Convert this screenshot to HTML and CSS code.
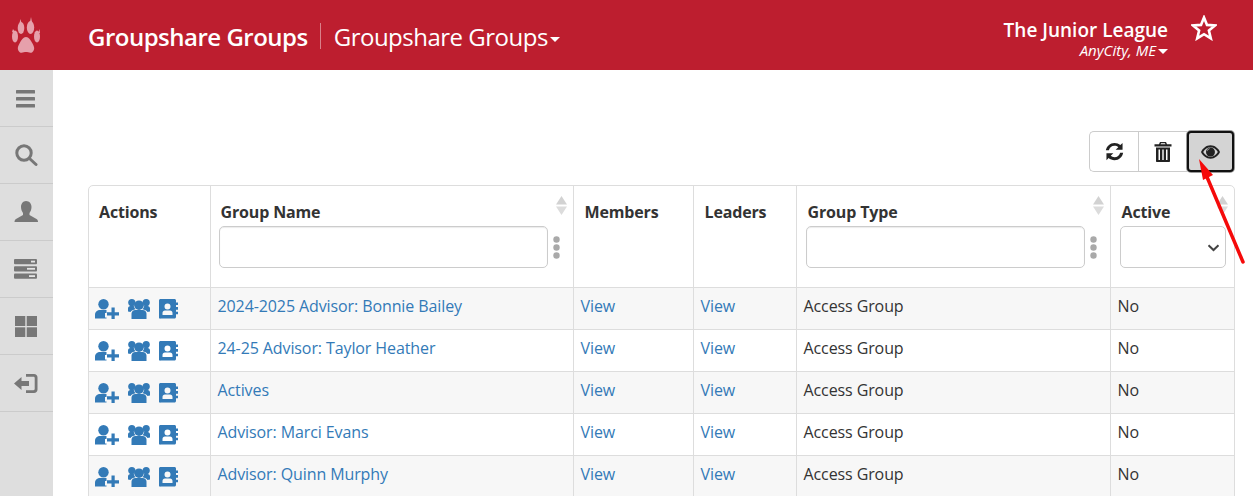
FILE: index.html
```html
<!DOCTYPE html>
<html lang="en">
<head>
<meta charset="utf-8">
<title>Groupshare Groups</title>
<link rel="stylesheet" href="styles.css">
</head>
<body>
<svg class="defs" width="0" height="0">
  <defs>
    <symbol id="i-add" viewBox="0 0 24 20"><circle cx="8.500" cy="5.200" r="5.200"/><path d="M0 19.500V16C0 12.800 2.500 11 5 11h6.500V14H10v4.500h1.500v1z"/><path d="M16.500 8.500h3.200v4.700H24v3.200h-4.300v4.600h-3.200v-4.600H12v-3.200h4.500z"/></symbol>
    <symbol id="i-group" viewBox="0 0 22 20"><circle cx="11" cy="6.200" r="4.800"/><circle cx="3.800" cy="3.600" r="3.600"/><circle cx="18.200" cy="3.600" r="3.600"/><path d="M3.500 20v-5.200c0-2.300 1.700-3.800 3.800-3.800h7.400c2.100 0 3.800 1.500 3.800 3.800V20z"/><path d="M0 12.500V9.500C0 8 1 7 2.500 7h3.300c.2 1.300.8 2.400 1.700 3.200-2.400.4-4.200 1.500-5 2.800z"/><path d="M22 12.500V9.500C22 8 21 7 19.500 7h-3.300c-.2 1.300-.8 2.400-1.700 3.200 2.400.4 4.200 1.500 5 2.800z"/></symbol>
    <symbol id="i-book" viewBox="0 0 19 20"><path fill-rule="evenodd" d="M1.500 0h14c.8 0 1.500.7 1.500 1.500v2h2v2.600h-2v2h2v2.600h-2v2h2v2.600h-2v2.700c0 .8-.7 1.500-1.500 1.500h-14C.7 20 0 19.300 0 18.500v-17C0 .7.700 0 1.500 0zM8.500 4.500a3 3 0 1 0 0 6 3 3 0 0 0 0-6zM3.500 16h10v-2c0-1.500-1-2.500-2.500-2.500H6c-1.500 0-2.500 1-2.500 2.500z"/></symbol>
    <symbol id="i-sort" viewBox="0 0 11 19"><path d="M5.500 0 11 8.500H0z" fill="#d2d2d2"/><path d="M0 10.500h11L5.500 19z" fill="#dcdcdc"/></symbol>
    <symbol id="i-dots" viewBox="0 0 7 23"><circle cx="3.500" cy="3.500" r="3.200"/><circle cx="3.500" cy="11.500" r="3.200"/><circle cx="3.500" cy="19.500" r="3.200"/></symbol>
  </defs>
</svg>

<header class="topbar">
  <div class="logo">
    <svg width="30" height="36" viewBox="0 0 30 36" fill="#e6a0ab">
      <path d="M15 20c2.800 0 4.600 3 6.500 6.500 1.700 3 2.800 6-.2 8.700-1.800 1.300-4.500-.2-6.300-.2s-4.500 1.500-6.300.2c-3-2.700-1.900-5.700-.2-8.700C10.400 23 12.200 20 15 20z"/>
      <ellipse cx="10" cy="11" rx="3.300" ry="6"/>
      <ellipse cx="19.500" cy="10.500" rx="3.700" ry="6.500"/>
      <ellipse cx="4" cy="19.500" rx="3" ry="6"/>
      <ellipse cx="26" cy="19.500" rx="3" ry="6"/>
      <path d="M9.500 2 10.500 6h-2zM20 0l1 5h-2zM2 12l2 3H1zM28.500 12l.5 4h-2z"/>
    </svg>
  </div>
  <div class="titles">
    <span class="app-title">Groupshare Groups</span>
    <span class="divider"></span>
    <span class="page-title">Groupshare Groups<span class="caret caret-big"></span></span>
  </div>
  <div class="org">
    <div class="org-name">The Junior League</div>
    <div class="org-city">AnyCity, ME<span class="caret"></span></div>
  </div>
  <svg class="star" width="26" height="26" viewBox="0 0 26 26" fill="none" stroke="#fff" stroke-width="2.600"><path d="M13 2.500l3 7.400 8 .6-6.100 5.100 1.900 7.800L13 19.200l-6.800 4.200 1.900-7.800L2 10.500l8-.6z"/></svg>
</header>

<div class="body-row">
  <nav class="sidebar">
    <a class="nav-item"><svg width="20" height="19" viewBox="0 0 20 19" fill="#777"><rect y="1" width="19" height="3.500" rx=".6"/><rect y="8" width="19" height="3.500" rx=".6"/><rect y="15" width="19" height="3.500" rx=".6"/></svg></a>
    <a class="nav-item"><svg width="24" height="24" viewBox="0 0 24 24" fill="none" stroke="#777" stroke-width="3"><circle cx="10" cy="10" r="7.200"/><path d="M15.500 15.500l6.500 6" stroke-linecap="round"/></svg></a>
    <a class="nav-item"><svg width="24" height="24" viewBox="0 0 24 24" fill="#777"><path d="M12 1c3.500 0 5.500 2.800 5.500 6 0 2.500-1 4.500-2 6v2l7 4c1 .6 1.500 1.500 1.500 3H.5c0-1.500.5-2.400 1.500-3l7-4v-2c-1-1.500-2-3.500-2-6 0-3.200 2-6 5-6z"/></svg></a>
    <a class="nav-item"><svg width="23" height="20" viewBox="0 0 23 20"><g fill="#777"><rect width="23" height="5.300" rx="1"/><rect y="7.200" width="23" height="5.300" rx="1"/><rect y="14.500" width="23" height="5.300" rx="1"/></g><g fill="#e4e4e4"><rect x="17" y="1.700" width="4" height="1.800"/><rect x="13" y="8.900" width="8" height="1.800"/><rect x="15" y="16.200" width="6" height="1.800"/></g></svg></a>
    <a class="nav-item"><svg width="22" height="21" viewBox="0 0 22 21" fill="#777"><rect width="10.300" height="10"/><rect x="11.700" width="10.300" height="10"/><rect y="11.300" width="10.300" height="9.700"/><rect x="11.700" y="11.300" width="10.300" height="9.700"/></svg></a>
    <a class="nav-item"><svg width="24" height="21" viewBox="0 0 24 21" fill="#777"><path d="M12 1h8c2 0 3.500 1.500 3.500 3.500v12c0 2-1.500 3.500-3.500 3.500h-8v-2.800h7.500c.7 0 1.200-.5 1.200-1.200V5c0-.7-.5-1.200-1.200-1.200H12z"/><path d="M0 10.500 7.500 4v4H15v5H7.500v4z"/></svg></a>
  </nav>

  <main class="content">
    <div class="toolbar">
      <div class="btn-group">
        <button class="btn" type="button"><svg width="23" height="23" viewBox="0 0 20 20" fill="#222"><path d="M17 2.500v6h-6l2.300-2.300C12.400 5.400 11.300 5 10 5 7.600 5 5.600 6.700 5.100 9H2.500C3 5.300 6.200 2.500 10 2.500c2 0 3.700.7 5.100 1.900zM3 17.500v-6h6l-2.300 2.300c.9.800 2 1.200 3.300 1.200 2.400 0 4.400-1.700 4.900-4h2.600c-.5 3.700-3.700 6.500-7.500 6.500-2 0-3.700-.7-5.100-1.900z"/></svg></button>
        <button class="btn" type="button"><svg width="18" height="20" viewBox="0 0 18 20" fill="#222"><path d="M6 0h6l1 2.300h4.500v2.200H.5V2.300H5zM7 1.300 6.600 2.300h4.800L11 1.300z"/><path d="M2 5.500h14V19c0 .6-.4 1-1 1H3c-.6 0-1-.4-1-1zM4.500 7.500v10.500h1.500V7.500zM8.300 7.500v10.500h1.400V7.500zM12 7.500v10.500h1.500V7.500z" fill-rule="evenodd"/></svg></button>
        <button class="btn btn-active" type="button"><svg width="19" height="14" viewBox="0 0 20 14"><path d="M10 0C5.500 0 2 3 0 7c2 4 5.500 7 10 7s8-3 10-7c-2-4-5.500-7-10-7z" fill="#222"/><path d="M10 2C7 2 4 3.700 2.300 7 4 10.300 7 12 10 12s6-1.700 7.700-5C16 3.700 13 2 10 2z" fill="#d4d4d4"/><circle cx="10" cy="7" r="4.700" fill="#222"/><path d="M9.500 3.500a3.500 3.500 0 0 0-3 3 2.500 2.500 0 0 1 3-3z" fill="#d4d4d4"/></svg></button>
      </div>
    </div>

    <div class="table-wrap">
      <table class="grid">
        <colgroup>
          <col class="c-actions"><col class="c-name"><col class="c-members"><col class="c-leaders"><col class="c-type"><col class="c-active">
        </colgroup>
        <thead>
          <tr>
            <th>Actions</th>
            <th class="sortable">
              <div>Group Name</div>
              <svg class="sort"><use href="#i-sort"/></svg>
              <div class="filter"><input class="input" type="text" aria-label="Group Name"><svg class="dots"><use href="#i-dots"/></svg></div>
            </th>
            <th>Members</th>
            <th>Leaders</th>
            <th class="sortable">
              <div>Group Type</div>
              <svg class="sort"><use href="#i-sort"/></svg>
              <div class="filter"><input class="input" type="text" aria-label="Group Type"><svg class="dots"><use href="#i-dots"/></svg></div>
            </th>
            <th class="sortable">
              <div>Active</div>
              <svg class="sort"><use href="#i-sort"/></svg>
              <div class="filter"><div class="select"><svg width="13" height="8" viewBox="0 0 13 8" fill="none" stroke="#444" stroke-width="2"><path d="M1.500 1.200 6.500 6l5-4.800"/></svg></div></div>
            </th>
          </tr>
        </thead>
        <tbody>
          <tr>
            <td class="acts"><svg class="ic-add"><use href="#i-add"/></svg><svg class="ic-group"><use href="#i-group"/></svg><svg class="ic-book"><use href="#i-book"/></svg></td>
            <td><a>2024-2025 Advisor: Bonnie Bailey</a></td><td><a>View</a></td><td><a>View</a></td><td>Access Group</td><td>No</td>
          </tr>
          <tr>
            <td class="acts"><svg class="ic-add"><use href="#i-add"/></svg><svg class="ic-group"><use href="#i-group"/></svg><svg class="ic-book"><use href="#i-book"/></svg></td>
            <td><a>24-25 Advisor: Taylor Heather</a></td><td><a>View</a></td><td><a>View</a></td><td>Access Group</td><td>No</td>
          </tr>
          <tr>
            <td class="acts"><svg class="ic-add"><use href="#i-add"/></svg><svg class="ic-group"><use href="#i-group"/></svg><svg class="ic-book"><use href="#i-book"/></svg></td>
            <td><a>Actives</a></td><td><a>View</a></td><td><a>View</a></td><td>Access Group</td><td>No</td>
          </tr>
          <tr>
            <td class="acts"><svg class="ic-add"><use href="#i-add"/></svg><svg class="ic-group"><use href="#i-group"/></svg><svg class="ic-book"><use href="#i-book"/></svg></td>
            <td><a>Advisor: Marci Evans</a></td><td><a>View</a></td><td><a>View</a></td><td>Access Group</td><td>No</td>
          </tr>
          <tr>
            <td class="acts"><svg class="ic-add"><use href="#i-add"/></svg><svg class="ic-group"><use href="#i-group"/></svg><svg class="ic-book"><use href="#i-book"/></svg></td>
            <td><a>Advisor: Quinn Murphy</a></td><td><a>View</a></td><td><a>View</a></td><td>Access Group</td><td>No</td>
          </tr>
        </tbody>
      </table>
    </div>
  </main>
</div>

<svg class="annot" width="60" height="110" viewBox="0 0 60 110" fill="none">
  <path d="M48 107 12 22" stroke="#f50a0a" stroke-width="3.500" stroke-linecap="round"/>
  <path d="M4 4 18 20 8 25z" fill="#f50a0a"/>
</svg>
</body>
</html>
```

FILE: styles.css
```css
* { box-sizing: border-box; }
html, body { margin: 0; height: 100%; overflow: hidden; }
body {
  font-family: "Open Sans", "Noto Sans", "Liberation Sans", sans-serif;
  font-size: 16px;
  color: #333;
  background: #fff;
  position: relative;
}
.defs { position: absolute; }

.topbar {
  height: 70px;
  background: #bd1e2f;
  color: #fff;
  display: flex;
  align-items: center;
}
.logo { width: 53px; display: flex; justify-content: center; padding-right: 1px; flex: none; }
.titles { margin-left: 35px; display: flex; align-items: center; flex: 1; padding-top: 2px; }
.app-title { font-size: 24px; font-weight: 600; letter-spacing: -.5px; }
.divider { width: 1px; height: 26px; background: #d9808a; margin: 0 13px 0 12px; }
.page-title { font-size: 24px; letter-spacing: -.5px; }
.caret {
  display: inline-block;
  border-top: 5px solid #fff;
  border-left: 5px solid transparent;
  border-right: 5px solid transparent;
  vertical-align: middle;
  margin-left: 2px;
}
.org { text-align: right; line-height: 1; padding-top: 7px; }
.org-name { font-size: 19px; font-weight: 600; line-height: 24px; }
.org-city { font-size: 15px; font-style: italic; line-height: 17px; }
.star { margin: 0 36px 14px 23px; flex: none; }

.body-row { display: flex; height: 426px; }
.sidebar { width: 53px; background: #dedede; flex: none; }
.nav-item {
  height: 57px;
  display: flex;
  align-items: center;
  justify-content: center;
  border-bottom: 1px solid #cbcbcb;
  padding-right: 2px;
}

.content { flex: 1; padding: 61px 18px 0 35px; min-width: 0; }
.toolbar { display: flex; justify-content: flex-end; height: 41px; margin-bottom: 13px; }
.btn-group { display: flex; margin-right: 1px; }
.btn {
  width: 49px;
  height: 41px;
  padding: 0;
  background: #fff;
  border: 1px solid #ccc;
  border-right: 0;
  display: flex;
  align-items: center;
  justify-content: center;
}
.btn:first-child { border-radius: 5px 0 0 5px; }
.btn-active {
  width: 47px;
  background: #d4d4d4;
  border: 2px solid #111;
  border-radius: 4px;
  box-shadow: 0 0 0 1px #999;
}

.table-wrap { border: 1px solid #ddd; border-radius: 5px 5px 0 0; overflow: hidden; width: 1147px; }
.grid { border-collapse: collapse; table-layout: fixed; width: 100%; }
.c-actions { width: 121px; }
.c-name { width: 363px; }
.c-members { width: 120px; }
.c-leaders { width: 103px; }
.c-type { width: 314px; }
.grid th {
  position: relative;
  height: 101px;
  padding: 14px 10px 0 10px;
  text-align: left;
  vertical-align: top;
  font-size: 16px;
  font-weight: 700;
  letter-spacing: -.15px;
  line-height: 24px;
  color: #333;
  border-right: 1px solid #ddd;
  border-bottom: 1px solid #ddd;
}
.grid th:nth-child(n+3) { padding-left: 11px; }
.grid th:last-child, .grid td:last-child { border-right: 0; }
.sort { position: absolute; top: 10px; right: 6px; width: 11px; height: 19px; fill: #ddd; }
.filter { display: flex; align-items: center; margin: 2px 0 0 -2px; }
.input {
  flex: 1;
  min-width: 0;
  height: 42px;
  border: 1px solid #ccc;
  border-radius: 5px;
  background: #fff;
  box-shadow: inset 0 1px 1px rgba(0,0,0,.08);
}
.dots { width: 7px; height: 23px; fill: #a9a9a9; margin: 0 3px 0 5px; flex: none; }
.select {
  flex: 1;
  height: 42px;
  border: 1px solid #ccc;
  border-radius: 5px;
  background: #fff;
  display: flex;
  align-items: center;
  justify-content: flex-end;
  padding-right: 5px;
  margin-right: -2px;
  padding-top: 2px;
}

.grid td {
  height: 42px;
  padding: 0 7px;
  font-size: 16px;
  letter-spacing: -.1px;
  border-right: 1px solid #ddd;
  border-bottom: 1px solid #ddd;
  white-space: nowrap;
  overflow: hidden;
  padding-bottom: 5px;
}
.grid tbody tr:nth-child(odd) { background: #f7f7f7; }
.grid a { color: #337ab7; }
.grid td.acts { padding: 2px 0 0 6px; fill: #337ab7; line-height: 0; }
.ic-add { width: 24px; height: 20px; margin-right: 9px; }
.ic-group { width: 22px; height: 20px; margin-right: 9px; }
.ic-book { width: 19px; height: 20px; }

.annot { position: absolute; left: 1195px; top: 155px; }
```
